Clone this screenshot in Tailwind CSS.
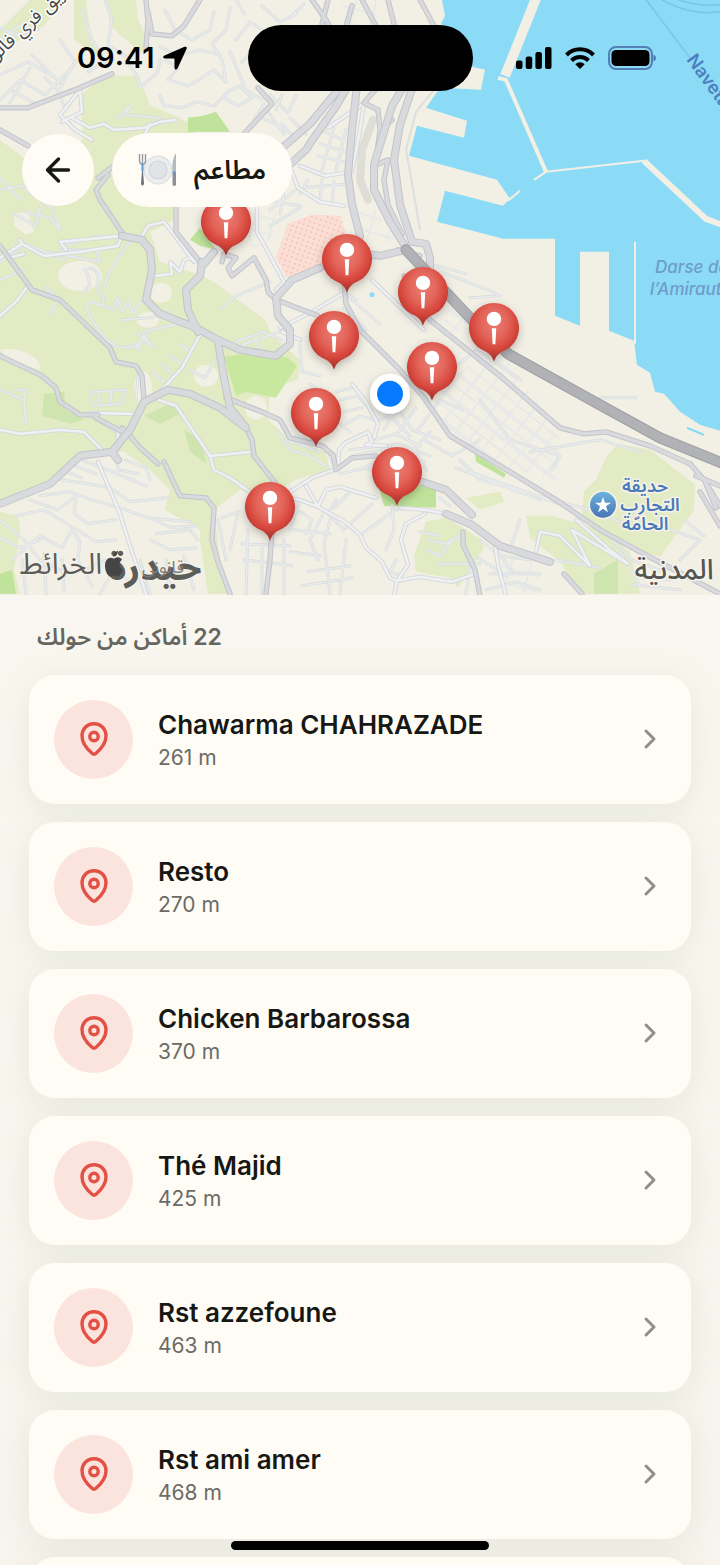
<!DOCTYPE html>
<html lang="ar">
<head>
  <meta charset="UTF-8" />
  <meta name="viewport" content="width=device-width, initial-scale=1.0" />
  <title>مطاعم</title>
  <script src="https://cdn.jsdelivr.net/npm/@tailwindcss/browser@4"></script>
</head>
<body class="h-screen overflow-hidden flex flex-col bg-linear-to-b from-[#faf8f0] to-[#f8f4ee] font-['Inter','Noto_Sans_Arabic','DejaVu_Sans',sans-serif] text-[#171714]">

  <!-- Map -->
  <section class="relative h-[38vh] shrink-0 overflow-hidden bg-[#f2efe5]">
    <svg class="absolute inset-0 w-full h-full" viewBox="0 0 720 595" preserveAspectRatio="xMidYMid slice" role="img" aria-label="Map">
      <defs>
        <radialGradient id="pinFill" cx="50%" cy="34%" r="60%">
          <stop offset="0" stop-color="#ea7d72" />
          <stop offset="0.45" stop-color="#e3655a" />
          <stop offset="0.75" stop-color="#d7463c" />
          <stop offset="1" stop-color="#a8352d" />
        </radialGradient>
        <linearGradient id="poiFill" x1="0" y1="0" x2="0" y2="1">
          <stop offset="0" stop-color="#6bb3dc" />
          <stop offset="1" stop-color="#4a73b5" />
        </linearGradient>
        <filter id="soft" x="-30%" y="-30%" width="160%" height="160%">
          <feDropShadow dx="0" dy="3" stdDeviation="4" flood-color="#000" flood-opacity="0.25" />
        </filter>
        <pattern id="blocks" width="16" height="23" patternUnits="userSpaceOnUse" patternTransform="rotate(38)">
          <path d="M0 0H16M0 0V23M0 13H16" fill="none" stroke="#dfe2e2" stroke-width="3" />
          <path d="M0 0H16M0 0V23M0 13H16" fill="none" stroke="#eceeee" stroke-width="1.4" />
        </pattern>
        <pattern id="blocks2" width="19" height="15" patternUnits="userSpaceOnUse" patternTransform="rotate(16)">
          <path d="M0 0H19M0 0V15" fill="none" stroke="#dfe2e2" stroke-width="3" />
          <path d="M0 0H19M0 0V15" fill="none" stroke="#eceeee" stroke-width="1.4" />
        </pattern>
        <pattern id="dots" width="5" height="5" patternUnits="userSpaceOnUse" patternTransform="rotate(20)">
          <rect width="5" height="5" fill="#fbdfd6" />
          <circle cx="2" cy="2" r="1" fill="#f6bdb4" />
        </pattern>
        <g id="pin">
          <path d="M0 34C-2 28-5 25-12 22A25 25 0 1 1 12 22C5 25 2 28 0 34Z" fill="url(#pinFill)" filter="url(#soft)" />
          <circle cx="0" cy="-9" r="7.2" fill="#fff" />
          <path d="M-2.2 0.5H2.2L1.4 16.5H-1.4Z" fill="#fff" />
        </g>

        <g id="lanes">
          <path d="M0 100L20 80L45 95L70 70L85 50M10 103L30 68M55 98L75 62L60 40M0 75L28 62L52 76M32 55L60 83M10 90L38 105M0 28L15 35L38 30M0 40L22 24M65 110L58 90L45 78" />
          <path d="M82 10L92 40L105 62L88 72M105 0L112 18L108 45L128 58M128 62L138 78L140 88L158 72L160 60M165 10L175 30L192 40L210 30L214 12M160 47L178 56L200 50L220 55" />
          <path d="M165 60L178 68L168 80L188 86L202 78L214 70L226 82L222 60L212 44L226 30L230 8M160 96L164 106L182 108L196 102L214 106L228 92L240 86L252 98L238 106L224 98" />
          <path d="M236 40L250 22L262 30L256 48L242 62M230 52L240 76L246 90L262 100M244 14L236 0M262 6L280 22L296 14M304 4L290 18M270 95L288 113L296 96M282 95L276 110M264 104L254 120M262 118L286 130M268 112L284 134" />
          <path d="M118 118L130 106L125 115L160 118M0 190L22 186L34 196M0 178L20 200M25 212L50 218L60 230L52 208L42 202M14 214L36 226L40 208M0 262L26 244L64 260M62 246L100 236M46 252L100 262L96 250L60 250" />
          <path d="M0 280L24 270M84 270L92 268L98 274L98 292L104 298L102 306L90 302L86 305L90 318L106 340L120 348L140 346L145 330M86 270L90 285L84 292M104 288L108 275L120 255L136 235M98 304L114 310L118 298L122 312L128 302L134 314L140 302" />
          <path d="M122 320L150 318L170 312M136 348L150 330L180 324M140 350L136 344M138 334L150 345M144 336L154 348M222 308L236 296L270 282M50 314L58 300L46 288M180 344L190 352M170 356L182 364M162 364L174 376M152 372L164 382M190 370L205 378L215 360" />
          <path d="M0 390L24 400L26 390L16 390M24 400L26 424M90 400L92 392L126 390L122 404L94 406L90 400M98 392L100 404M112 391L110 404M136 400L138 376M228 345L262 332L282 340M238 348L255 340M244 344L280 332L290 325M254 338L260 348" />
          <path d="M60 480L88 484L110 488L130 502L150 500L168 498M62 470L82 478M70 464L96 474M76 458L108 470L146 486M116 455L118 470L138 474M125 460L146 468L150 480M40 496L70 492L92 500L120 508L148 518L190 522M30 500L58 510L76 496L74 514L88 524L116 520" />
          <path d="M16 516L44 510L70 526L96 542L116 540M0 520L24 540L40 560L60 570M12 560L40 536L62 548L72 530L80 542L78 560L92 586M0 538L20 548L40 540M22 560L26 594M44 554L46 594M62 560L64 590M84 570L106 560L122 568M100 594L112 574L130 580" />
          <path d="M154 520L172 528L196 526M156 534L190 530L198 540M150 540L170 550L196 548M140 560L150 594M166 560L170 590M184 556L194 590M218 520L226 560M222 518L238 512L230 550M242 544L290 546M244 560L292 566M248 530L246 594M262 545V594M284 540V594M290 552L320 556M294 530L330 534" />
          <path d="M324 512L310 540L318 560M330 520L324 544L330 594M290 505L312 520L306 534M300 500L290 530M336 500L328 514L344 530M352 490L334 508M372 504L346 528M396 510L362 534M392 505L394 530L386 550M308 572L350 566M302 586L352 578M346 540L340 594M396 560L390 572L402 576" />
          <path d="M278 432L290 450L310 456L326 466M286 440L320 452M296 436L326 446L332 462M300 345L302 372L320 376M310 384L326 396M336 392L352 388M340 400L358 396L370 410M344 412L362 408M346 424L360 416L374 420M350 432L340 424" />
          <path d="M350 450L400 444L430 456M352 456L390 448L424 462M360 470L376 462M430 432L414 450L426 470M380 420L400 412L412 430L440 440M386 412L410 436M400 400L384 430M416 408L396 436M376 440L396 434L420 446M340 474L366 468L380 474" />
          <path d="M440 498L450 506M426 550L440 556L452 540M428 540L446 544L460 536M438 564L480 564M420 532L440 536M520 520L512 544M480 540L500 556L530 560M498 552L512 572M478 558L506 576M490 574H540M486 590L516 582L540 590M470 566L466 594M556 560L600 568" />
          <path d="M612 540L632 560L664 572M632 585L680 590M640 578L672 580M670 530L700 540L680 560M684 520L704 536M620 552L640 586M460 460L480 480L590 510L640 530M470 472L570 508M456 468L540 500M480 400L510 440L560 456L552 470" />
          <path d="M452 370L476 350L520 380M424 440L452 456L480 440M418 430L440 400L462 410M530 452L600 440L640 452M436 270L488 290L500 296L470 298M430 264L466 274M600 398H636M340 290L356 300M352 300L380 324M344 308L366 330" />
          <path d="M282 124L296 140M290 118L306 134M324 132L344 140M320 144L346 152M318 156L344 162M334 128L322 170M346 130L336 170M308 180L300 194M322 180L320 200M334 182L332 204M304 188L350 184M270 210L296 190M262 200L300 206M286 180L280 214M300 208L270 226" />
        </g>

        <g id="streets">
          <path d="M80 90L60 115L75 130L92 140M80 90L82 112L62 122M72 118L90 128L104 124L114 130L144 128L160 122L176 120M142 140L150 124" />
          <path d="M20 240L22 244L44 256L80 252L118 246L122 236L60 242L66 250M22 244L0 258M24 254L10 258M28 286L16 302L0 316M142 236L148 226L164 222L178 240L194 262M156 276L172 274L170 262L180 272L184 260L192 258L200 264" />
          <path d="M200 335L182 368L160 392L148 402M0 430L20 434L60 430L84 432L106 454M90 413L132 414M90 415L118 432L118 450M98 462L120 514L132 552L146 594M158 400L176 406L210 456M210 456L252 452M210 456L214 470L230 478L250 492" />
          <path d="M257 206V232L284 282L276 290M280 328L312 312L342 294M282 332L300 340M372 280L424 330" />
          <path d="M290 492L312 478L336 469M286 498L300 500L318 507L345 522L360 535L366 548L382 562L390 578L397 581M306 486L318 507M318 507L326 490L340 487L376 498M338 468L339 450L345 443L368 432L372 442L366 445L386 446M352 384L366 402L378 424L374 438" />
          <path d="M400 508L425 510L446 514M425 514L406 524L401 540L408 565L397 581L394 596M397 581L420 577L452 582L475 574M470 525L495 545L498 565L506 596M536 552L540 532L560 536L590 566M590 566L572 530L628 564L610 550L576 520" />
          <path d="M363 104L328 128M364 104L360 130L352 172M300 166L325 176L350 172M292 172L298 188L320 202L344 206" />
        </g>

        <g id="avenues">
          <path d="M146 0L148 22L146 48M148 12L152 34L172 36L184 26L200 0M0 108L28 108L80 88L112 74M0 130L28 146M108 175L96 190L100 200L124 236M98 178L116 164" />
          <path d="M258 88L272 104L244 134" />
          <path d="M0 246L32 290L60 300L110 348L116 362L136 366L142 376L144 400M0 356L42 376L56 388L60 402L80 415L98 415" />
          <path d="M176 205V232L200 262M222 262L224 254L236 258L228 268L232 276L254 258L266 280L268 292L276 300L318 316" />
          <path d="M96 418L130 436L140 448L158 464M164 462L180 496L206 498L214 508L212 540L218 562L230 594M130 436L122 428M226 398L262 412L280 420L290 438L322 446L333 455L336 470L352 458L376 456M246 428L252 440L254 456L276 484" />
          <path d="M272 530L270 560L266 594M344 280L346 304L360 330L398 368L424 398L450 436L500 466L556 500L600 530L640 552L720 594M420 256L398 250M404 276L430 320L500 376L560 428L584 434L606 432L650 446L690 464" />
          <path d="M690 464L704 480L720 506M696 476L720 486M706 484L716 508M700 492L720 526M463 532L463 545L475 570L480 596M564 574L582 594" />
          <path d="M312 0L326 20L348 60M328 0L322 24L340 80M352 6L344 34L360 80M362 0L378 30L384 80L364 103L378 110L380 130L376 162M388 0L398 40M420 0L434 26" />
          <path d="M374 166L388 160L384 180L388 205L402 234M382 128L392 120" />
        </g>

        <g id="highways">
          <path d="M122 236L142 240L150 250L152 270L146 300L160 314L196 328M202 262L200 276L186 290L188 310L198 332M214 252L204 264" />
          <path d="M196 328L214 338L240 350L276 356L290 344L290 330L278 316L276 298L292 280L320 268M218 342L224 378L230 408L246 428M168 390L190 394L220 408L246 428M168 390L144 402L130 430L112 452L80 456L50 484L0 504M112 452L118 460" />
          <path d="M422 482L446 490L472 515M446 514L472 525L500 546L550 562" />
          <path d="M348 86L335 108L318 132L306 150L284 170M338 90L310 124L280 150M357 86L352 130L348 175L352 205L360 236" />
          <path d="M404 86L392 106L380 145L374 165L374 190L390 222L406 248M413 86L400 125L394 160L400 205L412 242L426 244L430 258L430 270M406 250L380 256L346 252" />
        </g>
      </defs>

      <rect width="720" height="595" fill="#f2efe5" />

      <!-- Green areas -->
      <g fill="#e3ebc5">
        <path d="M0 30L30 0H66L44 26L20 40L0 48Z" />
        <path d="M74 0H86L90 30L102 60L74 40ZM104 0H136L138 20L152 48L140 52L112 28Z" />
        <path d="M0 140L42 172L83 140L80 96L104 76H138L150 105L196 126L178 205L172 222L150 232L160 262L200 275L215 283L265 320L272 335L300 360L298 380L270 388L268 420L290 440L326 452L330 470L296 480L262 500L240 490L214 510L220 560L230 594H208L200 540L200 530L165 510L170 490L150 470L124 452L75 455L60 480L40 490L0 503Z" />
        <path d="M0 512L18 516L20 530L14 570L20 594H0Z" />
        <path d="M607 456L618 444L650 450L695 485L694 510L660 557L620 545L582 516L584 492L596 480Z" />
        <path d="M426 522L446 518L482 540L484 548L458 588L450 578L416 572L414 556ZM526 516L552 516L600 530L630 552L640 594H580L560 562L530 538ZM466 498L500 492L504 502L480 510Z" />
        <path d="M314 320L344 316L346 350L314 344Z" />
      </g>
      <g fill="#f2efe5">
        <path d="M14 214L28 212L34 232L26 235L14 226Z" />
        <ellipse cx="80" cy="276" rx="22" ry="15" />
        <ellipse cx="161" cy="293" rx="11" ry="10" />
        <ellipse cx="206" cy="376" rx="12" ry="11" />
        <ellipse cx="148" cy="320" rx="11" ry="8" />
        <ellipse cx="143" cy="388" rx="9" ry="16" />
        <ellipse cx="256" cy="408" rx="11" ry="12" />
        <path d="M0 350C20 346 42 358 40 370L10 362Z" />
      </g>
      <path d="M224 357L260 352L288 358L297 366L276 398L246 392L236 396Z" fill="#c8e8a0" />
      <path d="M188 118L204 116L216 112L230 132H188ZM190 240L200 228L216 250L200 246ZM378 484L436 486L436 508L384 506ZM475 454L506 474L504 478L476 462ZM0 574L12 570L16 594H0Z" fill="#bfe39a" />
      <path d="M44 394L64 392L66 410L84 420L70 424L42 416ZM144 416L170 404L184 412L160 424ZM184 430L202 440L206 464L190 452ZM594 574L618 560V594H594Z" fill="#cfe5b0" />
      <path d="M288 224L312 215L340 216L348 240L322 268L287 278L276 258Z" fill="url(#dots)" />

      <!-- City blocks -->
      <path d="M420 400L500 344L560 440L556 480L500 466L450 436ZM450 300L478 320L440 340Z" fill="url(#blocks)" />
      <path d="M340 0L376 0L384 60L350 60ZM240 208L276 214L270 240L252 250ZM354 206L372 204L396 244L362 240Z" fill="url(#blocks2)" />
      <path d="M500 556L540 560V594H506Z" fill="url(#blocks2)" />

      <!-- Water -->
      <path d="M442 0L445 16L441 24L455 40L472 67L485 70L481 90L440 88L426 108L467 121L464 138L417 126L409 156L497 180L510 199L503 206L445 191L437 222L480 233L503 239H555V316L580 326V252H609V331L634 341L637 365L650 373L655 392L664 394L680 412L700 425L720 431V0Z" fill="#8bdbf7" />
      <g fill="none" stroke="#f2efe5">
        <path d="M537 -4L505 76" stroke-width="10" />
        <path d="M498 78L506 80L546 172" stroke-width="4" />
        <path d="M546 172L644 161M534 180L546 172M508 201L520 191M635 242V344" stroke-width="2" />
        <path d="M644 161L706 219L722 225" stroke-width="6" />
      </g>
      <path d="M646 0L690 58M662 0Q690 16 720 12M678 0Q700 7 720 5" fill="none" stroke="#79c4e8" stroke-width="1.5" />
      <path d="M687 428L704 435" stroke="#7bd7f5" stroke-width="2" />
      <circle cx="372" cy="295" r="2.5" fill="#8bdbf7" />

      <!-- Roads: casing first, then the surface -->
      <g fill="none" stroke-linecap="round" stroke-linejoin="round">
        <use href="#lanes" stroke="#dadede" stroke-width="3" />
        <use href="#lanes" stroke="#e9ecec" stroke-width="1.4" />
        <path d="M434 90L416 112L406 150L410 172L420 230" stroke="#dcdfdf" stroke-width="2" />
        <path d="M373 120L362 150L360 180L368 200" stroke="#dfded6" stroke-width="8" />
        <use href="#streets" stroke="#d3d6d9" stroke-width="4.4" />
        <use href="#streets" stroke="#eef0f2" stroke-width="2.6" />
        <use href="#avenues" stroke="#c3c4c9" stroke-width="5.4" />
        <use href="#avenues" stroke="#d9dade" stroke-width="3.4" />
        <use href="#highways" stroke="#c3c4c9" stroke-width="8" />
        <use href="#highways" stroke="#d9dade" stroke-width="6" />
        <path d="M406 250L470 318L508 354L600 405L660 438L724 464" stroke="#9fa0a4" stroke-width="11" />
        <path d="M406 250L470 318L508 354L600 405L660 438L724 464" stroke="#b1b2b6" stroke-width="9" />
      </g>

      <!-- Labels -->
      <g font-family="Inter, 'Noto Sans Arabic', 'DejaVu Sans', sans-serif" paint-order="stroke" stroke-linejoin="round">
        <text x="32" y="28" transform="rotate(-43 32 28)" text-anchor="middle" font-size="19" fill="#4a4a48" stroke="#fff" stroke-width="3">طريق فري فالون</text>
        <text x="686" y="60" transform="rotate(54 686 60)" font-size="18" font-weight="600" fill="#4c7fc0">Navette</text>
        <g font-size="17" font-style="italic" font-weight="500" fill="#6f9cc9">
          <text x="655" y="273">Darse de</text>
          <text x="650" y="295">l’Amirauté</text>
        </g>
        <g font-size="18" font-weight="600" fill="#4a78b8" stroke="#f4f4ea" stroke-width="3" text-anchor="middle">
          <text x="645" y="492">حديقة</text>
          <text x="650" y="511">التجارب</text>
          <text x="645" y="530">الحامّة</text>
        </g>
        <text x="674" y="579" text-anchor="middle" font-size="28" font-weight="500" fill="#555552" stroke="#f6f4ec" stroke-width="3">المدنية</text>
        <text x="61" y="574" text-anchor="middle" font-size="29" fill="#5c5c59" stroke="#f6f4ec" stroke-width="2">الخرائط</text>
        <text x="155" y="580" text-anchor="middle" font-size="38" font-weight="700" fill="#5c5c59" stroke="#f6f4ec" stroke-width="2">حيدرة</text>
        <text x="163" y="573" text-anchor="middle" font-size="17" fill="#7c7c78">قانوني</text>
      </g>
      <path d="M114 559C118 556 121 558 122 560C118 563 119 568 123 570C121 575 118 578 115 576C114 575 112 576 111 577C107 577 105 570 105 566C105 559 110 556 114 559ZM113 557C113 554 115 552 118 551C118 554 116 557 113 557Z" fill="#454543" />
      <circle cx="603" cy="505" r="14.5" fill="#f4f4ea" />
      <circle cx="603" cy="505" r="13" fill="url(#poiFill)" />
      <path d="M603 497L605 503H611L606 506.500L608 512.500L603 509L598 512.500L600 506.500L595 503H601Z" fill="#fff" />

      <!-- Pins -->
      <use href="#pin" x="226" y="222" />
      <use href="#pin" x="347" y="259" />
      <use href="#pin" x="423" y="292" />
      <use href="#pin" x="494" y="328" />
      <use href="#pin" x="334" y="336" />
      <use href="#pin" x="432" y="367" />
      <use href="#pin" x="316" y="413" />
      <use href="#pin" x="397" y="472" />
      <use href="#pin" x="270" y="507" />
      <circle cx="390" cy="394" r="20" fill="#fff" filter="url(#soft)" />
      <circle cx="390" cy="394" r="13" fill="#067aff" />
    </svg>

    <!-- Status bar and controls -->
    <div class="relative pt-[25px] flex flex-col gap-[42px]">
      <div class="grid grid-cols-[1fr_225px_1fr] items-center text-black">
        <div class="pl-4 flex items-center justify-center gap-2">
          <span class="text-[29px] leading-8 font-semibold">09:41</span>
          <svg class="w-6 h-6" viewBox="0 0 24 24"><path d="M21.500 0.800Q24.500 0 23.500 3L14.500 22.500Q12.500 25 11.500 22V13.500Q11.500 12.500 10.500 12.500H2Q-1.500 11.500 1.500 9.500Z" fill="currentColor" /></svg>
        </div>
        <div class="h-[66px] rounded-full bg-black"></div>
        <div class="pr-5 flex items-center justify-center gap-[13px]">
          <svg class="w-9 h-[22px]" viewBox="0 0 36 22" fill="currentColor">
            <rect x="0" y="13.500" width="6.500" height="8.500" rx="2" />
            <rect x="9.700" y="9.500" width="6.500" height="12.500" rx="2" />
            <rect x="19.400" y="5" width="6.500" height="17" rx="2" />
            <rect x="29" y="0" width="6.500" height="22" rx="2" />
          </svg>
          <svg class="w-[30px] h-[22px]" viewBox="0 0 30 22" fill="none" stroke="currentColor" stroke-width="4">
            <path d="M1.500 8A19 19 0 0 1 28.500 8" />
            <path d="M6.500 13.500A12 12 0 0 1 23.500 13.500" />
            <path d="M15 22L10.300 17.300A6.700 6.700 0 0 1 19.700 17.300Z" fill="currentColor" stroke="none" />
          </svg>
          <svg class="w-12 h-6" viewBox="0 0 48 24">
            <rect x="1" y="1" width="43" height="22" rx="7" fill="none" stroke="#527fb5" stroke-width="2" />
            <rect x="3.500" y="4" width="38" height="16" rx="4.500" fill="#000" />
            <path d="M45.500 8.500Q48 9.500 48 12T45.500 15.500Z" fill="#4775ae" />
          </svg>
        </div>
      </div>
      <div class="pl-[22px] flex items-center gap-[18px]">
        <button type="button" aria-label="رجوع" class="w-[72px] h-[72px] rounded-full bg-[#fffcf5] flex items-center justify-center">
          <svg class="w-7 h-7" viewBox="0 0 28 28" fill="none" stroke="currentColor" stroke-width="3.4" stroke-linecap="round" stroke-linejoin="round"><path d="M24.500 14H3.500M14.500 3L3.500 14L14.500 25" /></svg>
        </button>
        <div class="h-[74px] px-[26px] rounded-full bg-[#fffcf5] flex items-center gap-4">
          <svg class="w-10 h-9" viewBox="0 0 40 36">
            <circle cx="20" cy="18" r="14.500" fill="#dcdfe1" />
            <circle cx="20" cy="18" r="13.300" fill="#ebedee" />
            <circle cx="20" cy="18" r="9.500" fill="#cfd3d6" />
            <circle cx="20" cy="18" r="8.500" fill="#e1e4e6" />
            <path d="M1.500 2V9Q2 12.500 4.500 12.500T7.500 9V2M4.500 2V13" fill="none" stroke="#94999d" stroke-width="1.400" />
            <path d="M4.500 12L3 32Q4.500 35 6 32Z" fill="#6d747a" />
            <path d="M4.500 12V19" stroke="#5a96d0" stroke-width="2" />
            <path d="M38 1V20H34.500Q33.500 7 38 1Z" fill="#b4b9bd" />
            <path d="M34.500 20H38V33Q36.200 35 34.500 33Z" fill="#8d9296" />
            <path d="M36 19V23" stroke="#5a96d0" stroke-width="1.500" />
          </svg>
          <h1 dir="rtl" lang="ar" class="text-[26px] leading-8 font-semibold">مطاعم</h1>
        </div>
      </div>
    </div>
  </section>

  <!-- Places -->
  <main class="flex-1 min-h-0 overflow-hidden px-[29px] pt-7">
    <h2 dir="rtl" lang="ar" class="px-2 text-left text-[23px] leading-7 font-semibold text-[#666661]">22 أماكن من حولك</h2>
    <ul id="placeList" class="mt-6 flex flex-col gap-[18px]"></ul>
  </main>

  <div class="absolute bottom-[15px] left-1/2 -translate-x-1/2 z-20 w-[258px] h-[9px] rounded-full bg-black"></div>

  <script>
    const places = [
      { name: "Chawarma CHAHRAZADE", distance: 261 },
      { name: "Resto", distance: 270 },
      { name: "Chicken Barbarossa", distance: 370 },
      { name: "Thé Majid", distance: 425 },
      { name: "Rst azzefoune", distance: 463 },
      { name: "Rst ami amer", distance: 468 },
      { name: "", distance: null }
    ];

    const placeList = document.getElementById('placeList');

    places.forEach((place) => {
      const li = document.createElement('li');
      li.className = 'rounded-[26px] shadow-[0_6px_32px_rgba(170,190,165,0.22)]';
      li.innerHTML = `
        <a href="#" class="relative z-10 h-[129px] px-[25px] flex items-center gap-[25px] rounded-[26px] bg-[#fffcf5]">
          <span class="w-[79px] h-[79px] shrink-0 rounded-full bg-[#fce4de] flex items-center justify-center">
            <svg class="w-7 h-[34px]" viewBox="0 0 28 34" fill="none" stroke="#e35045" stroke-width="3.4" stroke-linejoin="round">
              <path d="M14 1.800C7 1.800 2 7 2 13.800C2 21 7.500 27.500 12 31.300Q14 33 16 31.300C20.500 27.500 26 21 26 13.800C26 7 21 1.800 14 1.800Z" />
              <circle cx="14" cy="14.500" r="4.200" />
            </svg>
          </span>
          <span class="pt-[2px] flex-1 min-w-0 flex flex-col">
            <span class="text-[26px] leading-9 font-semibold truncate">${place.name}</span>
            <span class="text-[21px] leading-[30px] text-[#6b6b67]">${place.distance ? place.distance + ' m' : ''}</span>
          </span>
          <svg class="w-8 h-8 shrink-0" viewBox="0 0 32 32" fill="none" stroke="#8f8f8a" stroke-width="3" stroke-linecap="round" stroke-linejoin="round"><path d="M12 8L20 16L12 24" /></svg>
        </a>`;
      placeList.appendChild(li);
    });
  </script>
</body>
</html>
